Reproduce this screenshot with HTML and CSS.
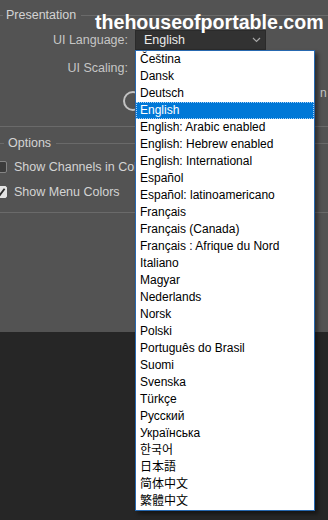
FILE: index.html
```html
<!DOCTYPE html>
<html lang="en">
<head>
  <meta charset="UTF-8">
  <meta name="viewport" content="width=device-width, initial-scale=1">
  <title>Preferences - Interface</title>
  <link rel="stylesheet" href="styles.css">
</head>
<body>

  <div class="screen">
    <div class="dialog">
      <section class="group">
        <div class="group-head"><span>Presentation</span></div>
        <div class="field">
          <label class="field-label">UI Language:</label>
          <div class="select">
            <span>English</span>
            <svg class="chevron" width="9" height="6" viewBox="0 0 9 6"><polyline points="1,1 4.5,4.5 8,1" fill="none" stroke="#a8a8a8" stroke-width="1.2"/></svg>
          </div>
        </div>
        <div class="field">
          <label class="field-label">UI Scaling:</label>
        </div>
        <div class="field dial-row">
          <span class="dial"></span>
          <span class="hint">n</span>
        </div>
      </section>

      <section class="group options">
        <div class="group-head"><span>Options</span></div>
        <label class="check"><span class="box"></span>Show Channels in Color</label>
        <label class="check"><span class="box on"><svg width="10" height="10" viewBox="0 0 10 10"><polyline points="1.5,5.2 4,7.8 8.6,1.8" fill="none" stroke="#2b2b2b" stroke-width="1.8"/></svg></span>Show Menu Colors</label>
      </section>
    </div>

    <ul class="lang-list">
      <li>Čeština</li>
      <li>Dansk</li>
      <li>Deutsch</li>
      <li class="selected">English</li>
      <li>English: Arabic enabled</li>
      <li>English: Hebrew enabled</li>
      <li>English: International</li>
      <li>Español</li>
      <li>Español: latinoamericano</li>
      <li>Français</li>
      <li>Français (Canada)</li>
      <li>Français : Afrique du Nord</li>
      <li>Italiano</li>
      <li>Magyar</li>
      <li>Nederlands</li>
      <li>Norsk</li>
      <li>Polski</li>
      <li>Português do Brasil</li>
      <li>Suomi</li>
      <li>Svenska</li>
      <li>Türkçe</li>
      <li>Русский</li>
      <li>Українська</li>
      <li class="cjk">한국어</li>
      <li class="cjk">日本語</li>
      <li class="cjk">简体中文</li>
      <li class="cjk">繁體中文</li>
    </ul>

    <div class="watermark">thehouseofportable.com</div>
  </div>

</body>
</html>
```

FILE: styles.css
```css
body {
  margin: 0;
  background: #262626;
  font-family: 'Liberation Sans', Arial, sans-serif;
  font-size: 12px;
  overflow: hidden;
}

.screen {
  position: relative;
  height: 520px;
}

.dialog {
  height: 332px;
  background: #535353;
  color: #d4d4d4;
  overflow: hidden;
}

.group {
  padding-bottom: 15px;
  border-bottom: 1px solid #6a6a6a;
}

.group-head {
  display: flex;
  align-items: center;
  height: 14px;
  margin-top: 8px;
  font-size: 12.5px;
}

.group-head::before {
  content: '';
  width: 3px;
  margin-right: 3px;
  border-top: 1px solid #6a6a6a;
}

.group-head::after {
  content: '';
  flex: 1;
  margin-left: 5px;
  border-top: 1px solid #6a6a6a;
}

.options {
  padding-bottom: 10px;
}

.options .group-head {
  margin-top: 9px;
}

.options .group-head::before {
  width: 4px;
  margin-right: 4px;
}

.field {
  display: flex;
  align-items: center;
  height: 20px;
  margin-top: 8px;
}

.field-label {
  flex-shrink: 0;
  width: 128px;
  text-align: right;
  font-size: 12.5px;
  color: #c6c6c6;
}

.select {
  display: flex;
  flex-shrink: 0;
  align-items: center;
  justify-content: space-between;
  box-sizing: border-box;
  width: 131px;
  height: 20px;
  margin-left: 7px;
  padding: 0 4px 0 8px;
  background: #323232;
  border: 1px solid #2a2a2a;
  font-size: 12.5px;
  color: #ececec;
}

.dial-row {
  margin-top: 13px;
}

.dial {
  flex-shrink: 0;
  box-sizing: border-box;
  width: 20px;
  height: 20px;
  margin-left: 123px;
  border: 2px solid #c2c2c2;
  border-radius: 50%;
}

.hint {
  flex-shrink: 0;
  align-self: flex-start;
  margin-top: -5px;
  margin-left: 177px;
  line-height: 14px;
  white-space: nowrap;
  color: #c6c6c6;
}

.check {
  display: flex;
  align-items: center;
  gap: 7px;
  height: 20px;
  margin-top: 5px;
  font-size: 12.5px;
  white-space: nowrap;
}

.group-head + .check {
  margin-top: 7px;
}

.box {
  display: flex;
  flex-shrink: 0;
  align-items: center;
  justify-content: center;
  box-sizing: border-box;
  width: 12px;
  height: 12px;
  margin-left: -5px;
  background: #3c3c3c;
  border: 1px solid #858585;
  border-radius: 2px;
}

.box.on {
  background: #e4e4e4;
  border-color: #e4e4e4;
}

.lang-list {
  position: absolute;
  top: 50px;
  left: 135px;
  width: 180px;
  margin: 0;
  padding: 0;
  list-style: none;
  background: #fff;
  border: 1px solid #2668b0;
  box-sizing: border-box;
  box-shadow: 3px 3px 4px rgba(0, 0, 0, 0.45);
  color: #000;
}

.lang-list li {
  height: 17px;
  line-height: 17px;
  padding-left: 4px;
  white-space: nowrap;
}

.lang-list .selected {
  background: #0078d7;
  color: #fff;
  outline: 1px dotted #a9d1f5;
  outline-offset: -1px;
}

.lang-list .cjk {
  font-family: 'Liberation Sans', 'Noto Sans CJK KR', 'Noto Sans CJK TC', sans-serif;
}

.watermark {
  position: absolute;
  top: 12px;
  left: 95px;
  font-size: 19.6px;
  line-height: 20px;
  font-weight: bold;
  color: #fff;
  white-space: nowrap;
}
```
